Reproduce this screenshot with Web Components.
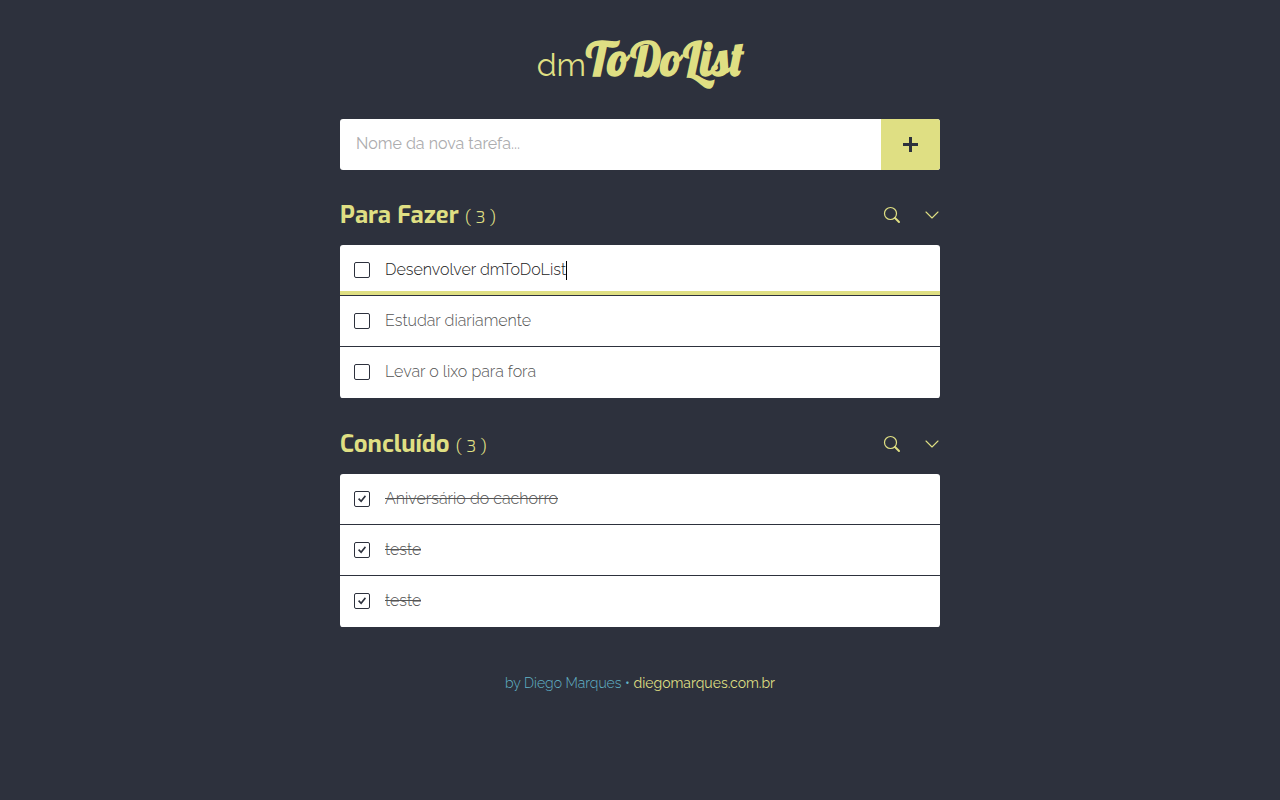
<!DOCTYPE html>
<html lang="pt-BR">
<head>
<meta charset="utf-8">
<meta name="viewport" content="width=device-width, initial-scale=1">
<title>dmToDoList</title>
<style>
  :root { --dark: #2d313d; --accent: #dfdf83; --blue: #62b4c8; --body: Raleway, Lato, sans-serif; }
  body { margin: 0; min-height: 100vh; background: var(--dark); color: var(--accent); font: 300 16px/24px var(--body); }
</style>
</head>
<body>
<todo-app>
  <todo-logo slot="logo"></todo-logo>
  <todo-new></todo-new>
  <todo-section heading="Para Fazer" count="3">
    <todo-item name="Desenvolver dmToDoList" active></todo-item>
    <todo-item name="Estudar diariamente"></todo-item>
    <todo-item name="Levar o lixo para fora"></todo-item>
  </todo-section>
  <todo-section heading="Concluído" count="3">
    <todo-item name="Aniversário do cachorro" done></todo-item>
    <todo-item name="teste" done></todo-item>
    <todo-item name="teste" done></todo-item>
  </todo-section>
  <todo-credit slot="credit"></todo-credit>
</todo-app>
<script>
  const define = (tag, render) => customElements.define(tag, class extends HTMLElement {
    constructor() { super(); this.attachShadow({ mode: "open" }); }
    connectedCallback() { this.shadowRoot.innerHTML = render(this); }
  });

  define("todo-app", () => `
    <style>
      :host { display: block; box-sizing: border-box; max-width: 632px; margin: 0 auto; padding: 32px 16px; }
      header { display: flex; justify-content: center; height: 64px; margin-bottom: 23px; }
      footer { margin-top: 43px; text-align: center; }
    </style>
    <header><slot name="logo"></slot></header>
    <main><slot></slot></main>
    <footer><slot name="credit"></slot></footer>`);

  define("todo-logo", () => `
    <style>
      :host { display: block; }
      h1 { margin: 0; display: flex; align-items: baseline; font-weight: 400; font-size: 32px; line-height: 54px; }
      strong { font: 700 46px/54px Lobster, "Liberation Serif", serif; }
    </style>
    <h1><span>dm</span><strong>ToDoList</strong></h1>`);

  define("todo-new", () => `
    <style>
      :host { display: block; }
      form { display: flex; height: 51px; border-radius: 3px; overflow: hidden; background: #fff; }
      input { flex: 1; min-width: 0; border: 0; outline: 0; padding: 0 16px 2px; font: inherit; font-weight: 400; color: #222; background: none; }
      input::placeholder { color: #acacae; opacity: 1; }
      button { width: 59px; padding: 0; border: 0; background: var(--accent); color: var(--dark); display: grid; place-items: center; }
      svg { display: block; }
    </style>
    <form>
      <input type="text" aria-label="Nome da nova tarefa" placeholder="Nome da nova tarefa...">
      <button type="button" aria-label="Adicionar"><svg width="15" height="15" viewBox="0 0 15 15"><path d="M6 0h3v6h6v3H9v6H6V9H0V6h6z" fill="currentColor"/></svg></button>
    </form>`);

  define("todo-section", el => `
    <style>
      :host { display: block; padding-bottom: 1px; }
      header { display: flex; justify-content: space-between; align-items: center; height: 32px; padding: 29px 0 14px; }
      h2 { margin: 0; font: 700 24px/32px Exo, "Exo 2", "Open Sans", sans-serif; }
      small { font: 300 18px/24px "Exo 2", "Open Sans", sans-serif; }
      nav { display: flex; gap: 24px; }
      button { width: 16px; height: 16px; padding: 0; border: 0; background: none; color: inherit; }
      svg { display: block; fill: none; stroke: currentColor; overflow: visible; }
      .list { display: block; border-radius: 3px; overflow: hidden; background: #fff; }
    </style>
    <header>
      <h2>${el.getAttribute("heading")} <small>( ${el.getAttribute("count")} )</small></h2>
      <nav>
        <button type="button" aria-label="Buscar"><svg width="16" height="16" viewBox="0 0 16 16"><circle cx="6.5" cy="6.5" r="6" stroke-width="1.2"/><path d="M11 11l4 4" stroke-width="2" stroke-linecap="round"/></svg></button>
        <button type="button" aria-label="Recolher"><svg width="16" height="16" viewBox="0 0 16 16"><path d="M2 5l6 6 6-6" stroke-width="1.1" stroke-linecap="round" stroke-linejoin="round"/></svg></button>
      </nav>
    </header>
    <div class="list"><slot></slot></div>`);

  define("todo-item", el => {
    const done = el.hasAttribute("done"), active = el.hasAttribute("active"), name = el.getAttribute("name");
    return `
    <style>
      :host { display: flex; align-items: center; box-sizing: border-box; height: 51px; padding: 0 14px; border-bottom: 1px solid var(--dark); color: #555; }
      :host(:last-child) { border-bottom-color: #fff; }
      :host([active]) { color: #222; box-shadow: inset 0 -4px var(--accent); }
      .check { appearance: none; box-sizing: border-box; flex: none; width: 16px; height: 16px; margin: 0 15px 0 0; border: 1px solid var(--dark); border-radius: 2px; display: grid; place-items: center; }
      .check:checked::before { content: ""; width: 8px; height: 8px; background: var(--dark); clip-path: polygon(0 52%, 15% 36%, 38% 62%, 86% 4%, 100% 18%, 40% 94%); }
      .name { field-sizing: content; min-width: 0; max-width: 100%; height: 24px; box-sizing: border-box; padding: 0; border: 0; outline: 0; background: none; font: inherit; color: inherit; }
      :host([done]) .name { text-decoration: line-through; }
      .caret { width: 1px; height: 19px; background: #000; }
    </style>
    <input class="check" type="checkbox" aria-label="Concluir ${name}" ${done ? "checked" : ""}>
    <input class="name" type="text" aria-label="Tarefa" value="${name}">${active ? '<span class="caret"></span>' : ""}`;
  });

  define("todo-credit", () => `
    <style>
      :host { display: block; font-size: 14px; color: var(--blue); }
      a { color: var(--accent); text-decoration: none; font-weight: 400; }
    </style>
    <span>by Diego Marques • </span><a href="#site">diegomarques.com.br</a>`);
</script>
</body>
</html>
